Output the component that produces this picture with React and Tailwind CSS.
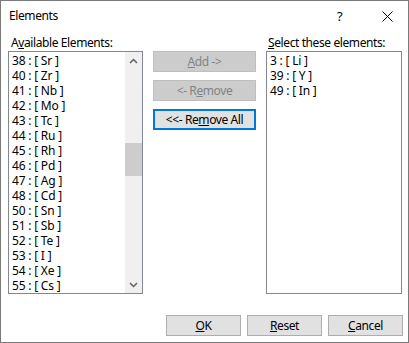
import React from "react";

const F = { fontFamily: '"Noto Sans", "Open Sans", sans-serif' };

const left = [
  ["38", "Sr"], ["40", "Zr"], ["41", "Nb"], ["42", "Mo"], ["43", "Tc"], ["44", "Ru"],
  ["45", "Rh"], ["46", "Pd"], ["47", "Ag"], ["48", "Cd"], ["50", "Sn"], ["51", "Sb"],
  ["52", "Te"], ["53", "I"], ["54", "Xe"], ["55", "Cs"],
];
const right = [["3", "Li"], ["39", "Y"], ["49", "In"]];

function Item({ n, s }) {
  return (
    <div className="h-[15px] leading-[15px] whitespace-nowrap pl-[3px] text-black tracking-[-0.2px]">
      {`${n} : [ ${s} ]`}
    </div>
  );
}

function Chevron({ up }) {
  return (
    <svg width="9" height="6" viewBox="0 0 9 6">
      <path
        d={up ? "M1 5 L4.5 1.5 L8 5" : "M1 1 L4.5 4.5 L8 1"}
        fill="none"
        stroke="#606060"
        strokeWidth="1.5"
      />
    </svg>
  );
}

function Btn({ children, disabled, focused, className = "" }) {
  const base = disabled
    ? "bg-[#cccccc] border border-[#bfbfbf] text-[#838383]"
    : focused
    ? "bg-[#e1e1e1] border-2 border-[#0078d7] text-black"
    : "bg-[#e1e1e1] border border-[#adadad] text-black";
  return (
    <div className={`flex items-center justify-center h-[21px] text-[12px] ${base} ${className}`}>
      {children}
    </div>
  );
}

export default function App() {
  return (
    <div
      className="w-[409px] h-[343px] border border-[#7a7a7a] bg-white flex flex-col text-[12px] tracking-[-0.4px] text-black"
      style={F}
    >
      <div className="h-[30px] flex items-center pl-[8px] relative">
        <span className="text-[12px]">Elements</span>
        <span className="absolute left-[336px] top-[6px] text-[13px]">?</span>
        <svg className="absolute left-[381px] top-[10px]" width="11" height="11" viewBox="0 0 11 11">
          <path d="M0.5 0.5 L10.5 10.5 M10.5 0.5 L0.5 10.5" stroke="#000" strokeWidth="1" />
        </svg>
      </div>
      <div className="flex pl-[7px] pt-[3px]">
        <div className="w-[135px] flex flex-col">
          <div className="h-[17px] leading-[17px] pl-[3px]">
            A<span className="underline">v</span>ailable Elements:
          </div>
          <div className="h-[243px] border border-[#828790] flex">
            <div className="flex-1 pt-[1px] overflow-hidden">
              {left.map(([n, s]) => (
                <Item key={n} n={n} s={s} />
              ))}
            </div>
            <div className="w-[17px] bg-[#f0f0f0] flex flex-col items-center">
              <div className="h-[17px] flex items-center justify-center">
                <Chevron up />
              </div>
              <div className="h-[74px]" />
              <div className="w-full h-[33px] bg-[#cdcdcd]" />
              <div className="flex-1" />
              <div className="h-[17px] flex items-center justify-center">
                <Chevron />
              </div>
            </div>
          </div>
        </div>
        <div className="w-[103px] ml-[10px] pt-[17px] flex flex-col gap-[8px]">
          <Btn disabled>
            <span>
              <span className="underline">A</span>dd -&gt;
            </span>
          </Btn>
          <Btn disabled>
            <span>
              &lt;- R<span className="underline">e</span>move
            </span>
          </Btn>
          <Btn focused>
            <span>
              &lt;&lt;- Re<span className="underline">m</span>ove All
            </span>
          </Btn>
        </div>
        <div className="w-[136px] ml-[10px] flex flex-col">
          <div className="h-[17px] leading-[17px] pl-[2px]">
            <span className="underline">S</span>elect these elements:
          </div>
          <div className="h-[243px] border border-[#828790] pt-[1px]">
            {right.map(([n, s]) => (
              <Item key={n} n={n} s={s} />
            ))}
          </div>
        </div>
      </div>
      <div className="flex justify-end gap-[6px] pr-[5px] mt-[21px]">
        <Btn className="w-[75px]">
          <span>
            <span className="underline">O</span>K
          </span>
        </Btn>
        <Btn className="w-[75px]">
          <span>
            <span className="underline">R</span>eset
          </span>
        </Btn>
        <Btn className="w-[75px]">
          <span>
            <span className="underline">C</span>ancel
          </span>
        </Btn>
      </div>
    </div>
  );
}
